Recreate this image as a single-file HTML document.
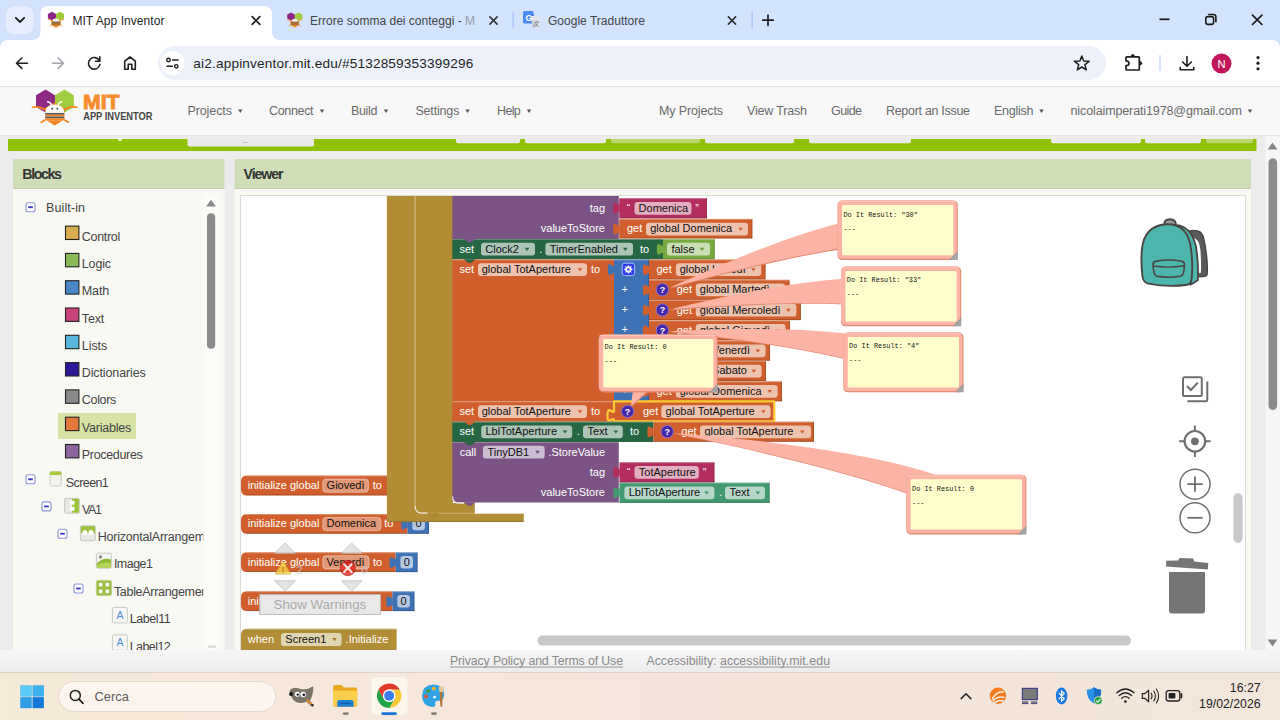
<!DOCTYPE html>
<html><head><meta charset="utf-8"><title>MIT App Inventor</title>
<style>
*{margin:0;padding:0}
html,body{width:1280px;height:720px;overflow:hidden;background:#ececec}
svg{display:block;position:absolute;left:0;top:0}
text{font-family:"Liberation Sans",sans-serif;white-space:pre}
.m{font-family:"Liberation Mono",monospace}
</style></head><body>
<svg width="1280" height="720" viewBox="0 0 1280 720">
<rect x="0" y="0" width="1280" height="40" fill="#d3e3fd"/>
<rect x="0" y="40" width="1280" height="47" fill="#ffffff"/>
<path d="M0 40 H8 A8 8 0 0 0 0 48 Z" fill="#d3e3fd"/>
<path d="M1280 40 H1272 A8 8 0 0 1 1280 48 Z" fill="#d3e3fd"/>
<rect x="6" y="6.5" width="27.5" height="27.5" fill="#e6eefd" rx="8"/>
<path d="M15.8 17.8 L20 22 L24.2 17.8" fill="none" stroke="#1f1f1f" stroke-width="1.8" stroke-linecap="round" stroke-linejoin="round"/>
<path d="M32 40 Q40.5 40 40.5 31.5 V14 Q40.5 6 48.5 6 H264 Q272 6 272 14 V31.5 Q272 40 280.5 40 Z" fill="#ffffff"/>
<g transform="translate(47.9,11.8) scale(1)">
<path d="M4.05 0 L8.1 2.1 V6.4 L4.05 8.5 L0 6.4 V2.1 Z" fill="#8e2486"/>
<path d="M12.15 0 L16.2 2.1 V6.4 L12.15 8.5 L8.1 6.4 V2.1 Z" fill="#9ccb3b"/>
<path d="M3.6 9 L8.1 6.8 L12.6 9 V13.2 L8.1 15.9 L3.6 13.2 Z" fill="#f6871f"/>
<path d="M0.2 7.6 Q2.3 7.4 4.2 9.2 M16 7.6 Q13.9 7.4 12 9.2 M3.9 13 L1.9 14.3 M12.3 13 L14.3 14.3" fill="none" stroke="#f6871f" stroke-width="1"/>
<ellipse cx="8.1" cy="8.6" rx="3.2" ry="1.9" fill="#ececec"/>
<rect x="3.9" y="9.7" width="8.4" height="3.5" fill="#b27a3e"/>
<rect x="3.9" y="10.2" width="8.4" height="0.8" fill="#8d6239"/>
<rect x="3.9" y="11.9" width="8.4" height="0.8" fill="#8d6239"/>
</g>
<text x="72.4" y="25.2" font-size="12" fill="#1f1f1f" textLength="92" lengthAdjust="spacing">MIT App Inventor</text>
<path d="M252.2 16.7 L259.8 24.3 M259.8 16.7 L252.2 24.3" fill="none" stroke="#1f1f1f" stroke-width="1.7" stroke-linecap="round"/>
<g transform="translate(287.2,12.6) scale(0.94)">
<path d="M4.05 0 L8.1 2.1 V6.4 L4.05 8.5 L0 6.4 V2.1 Z" fill="#8e2486"/>
<path d="M12.15 0 L16.2 2.1 V6.4 L12.15 8.5 L8.1 6.4 V2.1 Z" fill="#9ccb3b"/>
<path d="M3.6 9 L8.1 6.8 L12.6 9 V13.2 L8.1 15.9 L3.6 13.2 Z" fill="#f6871f"/>
<path d="M0.2 7.6 Q2.3 7.4 4.2 9.2 M16 7.6 Q13.9 7.4 12 9.2 M3.9 13 L1.9 14.3 M12.3 13 L14.3 14.3" fill="none" stroke="#f6871f" stroke-width="1"/>
<ellipse cx="8.1" cy="8.6" rx="3.2" ry="1.9" fill="#ececec"/>
<rect x="3.9" y="9.7" width="8.4" height="3.5" fill="#b27a3e"/>
<rect x="3.9" y="10.2" width="8.4" height="0.8" fill="#8d6239"/>
<rect x="3.9" y="11.9" width="8.4" height="0.8" fill="#8d6239"/>
</g>
<defs><linearGradient id="fade" x1="0" x2="1" y1="0" y2="0"><stop offset="0" stop-color="#3a3f47"/><stop offset="0.88" stop-color="#3a3f47"/><stop offset="1" stop-color="#3a3f47" stop-opacity="0.15"/></linearGradient></defs>
<text x="310" y="25.2" font-size="12" fill="#41464d" textLength="165" lengthAdjust="spacing">Errore somma dei conteggi - M</text>
<rect x="462" y="10" width="16" height="22" fill="#d3e3fd" opacity="0.55"/>
<path d="M489.9 16.9 L497.1 24.1 M497.1 16.9 L489.9 24.1" fill="none" stroke="#30343a" stroke-width="1.6" stroke-linecap="round"/>
<rect x="512.5" y="12" width="1.4" height="16" fill="#a8c7fa"/>
<g transform="translate(523,11)">
<path d="M1.5 0 H10 L13 12.5 H1.5 Q0 12.5 0 11 V1.5 Q0 0 1.5 0 Z" fill="#4a8af4"/>
<path d="M7.5 5 H16 Q17.5 5 17.5 6.5 V16 Q17.5 17.5 16 17.5 H10.5 Z" fill="#dfe3ea"/>
<path d="M10.5 17.5 L13 12.5 L9 12.5 Z" fill="#b8c4d8"/>
<text x="2.6" y="9.6" font-size="8.5" fill="#ffffff" font-weight="bold">G</text>
<text x="10.2" y="14.8" font-size="6.5" fill="#5f6b7a" font-family="&quot;Liberation Sans&quot;,&quot;Noto Sans CJK SC&quot;,sans-serif">文</text>
</g>
<text x="548" y="25.2" font-size="12" fill="#41464d" textLength="97" lengthAdjust="spacing">Google Traduttore</text>
<path d="M728.4 16.9 L735.6 24.1 M735.6 16.9 L728.4 24.1" fill="none" stroke="#30343a" stroke-width="1.6" stroke-linecap="round"/>
<rect x="751.5" y="12" width="1.4" height="16" fill="#a8c7fa"/>
<path d="M768 15 V25.5 M762.8 20.2 H773.2" fill="none" stroke="#1f1f1f" stroke-width="1.7" stroke-linecap="round"/>
<path d="M1159.5 19.3 H1169.5" fill="none" stroke="#1a1a1a" stroke-width="1.7"/>
<rect x="1205.8" y="16.6" width="7.8" height="7.8" rx="2.2" fill="none" stroke="#1a1a1a" stroke-width="1.6"/>
<path d="M1208.2 14.5 H1213.4 Q1215.9 14.5 1215.9 17 V22.2" fill="none" stroke="#1a1a1a" stroke-width="1.6"/>
<path d="M1252 14.6 L1262.4 25 M1262.4 14.6 L1252 25" fill="none" stroke="#1a1a1a" stroke-width="1.7"/>
<path d="M27.5 63.2 H16.8 M21.8 58 L16.5 63.2 L21.8 68.4" fill="none" stroke="#1f1f1f" stroke-width="1.6" stroke-linecap="round" stroke-linejoin="round"/>
<path d="M52.5 63.2 H63.2 M58.2 58 L63.5 63.2 L58.2 68.4" fill="none" stroke="#a3a6ab" stroke-width="1.6" stroke-linecap="round" stroke-linejoin="round"/>
<path d="M99.3 60.5 A5.8 5.8 0 1 0 99.9 64.6" fill="none" stroke="#1f1f1f" stroke-width="1.6" stroke-linecap="round"/>
<path d="M99.8 56.8 V61.2 H95.4" fill="none" stroke="#1f1f1f" stroke-width="1.6" stroke-linecap="round" stroke-linejoin="round"/>
<path d="M124.7 69.2 V61.2 L130 57 L135.3 61.2 V69.2 H131.8 V64.3 H128.2 V69.2 Z" fill="none" stroke="#1f1f1f" stroke-width="1.6" stroke-linejoin="round"/>
<rect x="158" y="46" width="948" height="34" fill="#edf2fa" rx="17"/>
<circle cx="172.5" cy="63" r="12" fill="#ffffff"/>
<circle cx="168.5" cy="60" r="1.7" fill="none" stroke="#1f1f1f" stroke-width="1.4"/>
<path d="M172.5 60 H178" fill="none" stroke="#1f1f1f" stroke-width="1.5" stroke-linecap="round"/>
<circle cx="176.3" cy="66.3" r="1.7" fill="none" stroke="#1f1f1f" stroke-width="1.4"/>
<path d="M167 66.3 H172.3" fill="none" stroke="#1f1f1f" stroke-width="1.5" stroke-linecap="round"/>
<text x="193.3" y="68" font-size="13.6" fill="#1f1f1f" textLength="280" lengthAdjust="spacing">ai2.appinventor.mit.edu/#5132859353399296</text>
<path d="M1081.8 56.0 L1083.7 61.0 L1089.1 61.3 L1084.9 64.7 L1086.3 69.9 L1081.8 67.0 L1077.3 69.9 L1078.7 64.7 L1074.5 61.3 L1079.9 61.0 Z" fill="none" stroke="#1f1f1f" stroke-width="1.5" stroke-linejoin="round"/>
<path d="M1126.8 56.8 H1138.5 Q1139.3 56.8 1139.3 57.6 V69.2 Q1139.3 70 1138.5 70 H1126.8 Q1126 70 1126 69.2 V65.7 Q1129 65.6 1129 63.3 Q1129 61 1126 60.9 V57.6 Q1126 56.8 1126.8 56.8 Z" fill="none" stroke="#1f1f1f" stroke-width="1.7" stroke-linejoin="round"/>
<path d="M1130.6 56.6 Q1131 54 1132.8 54 Q1134.6 54 1135 56.6 Z" fill="#1f1f1f"/>
<path d="M1139.5 61 Q1142.2 61.3 1142.2 63.3 Q1142.2 65.3 1139.5 65.6 Z" fill="#1f1f1f"/>
<rect x="1159.3" y="55" width="1.4" height="16" fill="#c7d7f5"/>
<path d="M1187 56.5 V66 M1182.6 62 L1187 66.3 L1191.4 62" fill="none" stroke="#1f1f1f" stroke-width="1.6" stroke-linecap="round" stroke-linejoin="round"/>
<path d="M1180.2 67.5 V69.8 H1193.8 V67.5" fill="none" stroke="#1f1f1f" stroke-width="1.6" stroke-linecap="round" stroke-linejoin="round"/>
<circle cx="1221.5" cy="63.5" r="10" fill="#c2185b"/>
<text x="1221.5" y="67.6" font-size="11.2" fill="#ffffff" text-anchor="middle">N</text>
<circle cx="1258" cy="57.6" r="1.6" fill="#1f1f1f"/>
<circle cx="1258" cy="63.2" r="1.6" fill="#1f1f1f"/>
<circle cx="1258" cy="68.8" r="1.6" fill="#1f1f1f"/>
<rect x="0" y="86" width="1280" height="1" fill="#e3e3e3"/>
<rect x="0" y="87" width="1280" height="48" fill="#f8f8f8"/>
<rect x="0" y="135" width="1280" height="1" fill="#e6e6e2"/>
<path d="M45.6 89.6 L55 95.2 V107 L45.6 112.4 L36 107 V95.2 Z" fill="#8f2a84"/>
<path d="M64.4 89.6 L73.8 95.2 V107 L64.4 112.4 L55 107 V95.2 Z" fill="#a0cc3f"/>
<path d="M45 108 L54.7 102.5 L64.4 108 V119.5 L54.7 125.4 L45 119.5 Z" fill="#f5841f"/>
<path d="M32.5 107.3 Q39 105.6 46.5 110.5" fill="none" stroke="#f5841f" stroke-width="1.7" stroke-linecap="round"/>
<path d="M76.8 107.3 Q70.5 105.6 63 110.5" fill="none" stroke="#f5841f" stroke-width="1.7" stroke-linecap="round"/>
<path d="M45.8 119.6 L41.3 122.3 M63.6 119.6 L68.2 122.3" fill="none" stroke="#f5841f" stroke-width="1.7" stroke-linecap="round"/>
<path d="M45.3 113 Q45.3 104.5 54.7 104.5 Q64.2 104.5 64.2 113 Z" fill="#ffffff"/>
<rect x="45.3" y="112.8" width="18.9" height="7.4" fill="#ffffff"/>
<rect x="45.3" y="112.9" width="18.9" height="1.9" fill="#5a5a5a"/>
<rect x="45.3" y="114.8" width="18.9" height="1.7" fill="#f5841f"/>
<rect x="45.3" y="116.5" width="18.9" height="1.9" fill="#5a5a5a"/>
<rect x="45.3" y="118.4" width="18.9" height="1.6" fill="#f5841f"/>
<circle cx="52.2" cy="108.7" r="0.9" fill="#333"/>
<circle cx="57.3" cy="108.7" r="0.9" fill="#333"/>
<path d="M51.5 105 Q50.6 102.2 47.6 101.8 M58 105 Q58.9 102.2 61.9 101.8" fill="none" stroke="#ffffff" stroke-width="1.4" stroke-linecap="round"/>
<text x="83" y="109" font-size="19.8" fill="#f78d2c" textLength="36.6" lengthAdjust="spacingAndGlyphs" font-weight="bold" stroke="#f78d2c" stroke-width="0.9">MIT</text>
<text x="83.2" y="120.4" font-size="10.2" fill="#454545" textLength="69.3" lengthAdjust="spacingAndGlyphs" font-weight="bold">APP INVENTOR</text>
<text x="187.4" y="115.4" font-size="12.5" fill="#6a6a6a" textLength="44.6" lengthAdjust="spacing">Projects</text>
<path d="M238.1 109.5 H242.5 L240.3 113 Z" fill="#555"/>
<text x="269" y="115.4" font-size="12.5" fill="#6a6a6a" textLength="44.6" lengthAdjust="spacing">Connect</text>
<path d="M319.8 109.5 H324.2 L322 113 Z" fill="#555"/>
<text x="351" y="115.4" font-size="12.5" fill="#6a6a6a" textLength="26.4" lengthAdjust="spacing">Build</text>
<path d="M383.8 109.5 H388.2 L386 113 Z" fill="#555"/>
<text x="415.4" y="115.4" font-size="12.5" fill="#6a6a6a" textLength="44" lengthAdjust="spacing">Settings</text>
<path d="M465.3 109.5 H469.7 L467.5 113 Z" fill="#555"/>
<text x="497" y="115.4" font-size="12.5" fill="#6a6a6a" textLength="23.8" lengthAdjust="spacing">Help</text>
<path d="M526.8 109.5 H531.2 L529 113 Z" fill="#555"/>
<text x="659" y="115.4" font-size="12.5" fill="#6a6a6a" textLength="64" lengthAdjust="spacing">My Projects</text>
<text x="747" y="115.4" font-size="12.5" fill="#6a6a6a" textLength="60" lengthAdjust="spacing">View Trash</text>
<text x="831" y="115.4" font-size="12.5" fill="#6a6a6a" textLength="31" lengthAdjust="spacing">Guide</text>
<text x="886" y="115.4" font-size="12.5" fill="#6a6a6a" textLength="84" lengthAdjust="spacing">Report an Issue</text>
<text x="994" y="115.4" font-size="12.5" fill="#6a6a6a" textLength="39.5" lengthAdjust="spacing">English</text>
<path d="M1039.3 109.5 H1043.7 L1041.5 113 Z" fill="#555"/>
<text x="1070.5" y="115.4" font-size="12.5" fill="#6a6a6a" textLength="171.5" lengthAdjust="spacing">nicolaimperati1978@gmail.com</text>
<path d="M1247.8 109.5 H1252.2 L1250 113 Z" fill="#555"/>
<rect x="8" y="139" width="1248.5" height="12" fill="#8fc202"/>
<path d="M187.5 139 H314 V144.5 Q314 146.5 312 146.5 H189.5 Q187.5 146.5 187.5 144.5 Z" fill="#e9e9e9"/>
<circle cx="120" cy="139" r="2" fill="#f4f4f0"/>
<text x="243" y="143" font-size="8" fill="#555">..</text>
<path d="M456 139 H520 V141.3 Q520 143.3 518 143.3 H458 Q456 143.3 456 141.3 Z" fill="#ebebeb"/>
<path d="M525 139 H606 V141.3 Q606 143.3 604 143.3 H527 Q525 143.3 525 141.3 Z" fill="#ebebeb"/>
<path d="M611 139 H700 V141.3 Q700 143.3 698 143.3 H613 Q611 143.3 611 141.3 Z" fill="#b9d66c"/>
<path d="M705 139 H794 V141.3 Q794 143.3 792 143.3 H707 Q705 143.3 705 141.3 Z" fill="#ebebeb"/>
<path d="M809 139 H911 V141.3 Q911 143.3 909 143.3 H811 Q809 143.3 809 141.3 Z" fill="#ebebeb"/>
<path d="M1051 139 H1141 V141.3 Q1141 143.3 1139 143.3 H1053 Q1051 143.3 1051 141.3 Z" fill="#ebebeb"/>
<path d="M1145 139 H1201 V141.3 Q1201 143.3 1199 143.3 H1147 Q1145 143.3 1145 141.3 Z" fill="#ebebeb"/>
<path d="M1206 139 H1253 V141.3 Q1253 143.3 1251 143.3 H1208 Q1206 143.3 1206 141.3 Z" fill="#b9d66c"/>
<rect x="1265.5" y="136" width="14.5" height="514" fill="#f6f6f6"/>
<path d="M1272.5 142.5 L1277.5 149.5 H1267.5 Z" fill="#858585"/>
<path d="M1272.5 646.5 L1277.5 639.5 H1267.5 Z" fill="#858585"/>
<rect x="1268.5" y="158.3" width="8.6" height="251.7" fill="#8b8b8b" rx="4.3"/>
<rect x="13" y="159" width="211.5" height="30" fill="#cfdeb7"/>
<rect x="13" y="188" width="211.5" height="1" fill="#c3cfae"/>
<rect x="13" y="189" width="211.5" height="461" fill="#f9f9f4"/>
<rect x="234.5" y="159" width="1016.5" height="30" fill="#cfdeb7"/>
<rect x="234.5" y="188" width="1016.5" height="1" fill="#c3cfae"/>
<rect x="234.5" y="189" width="1016.5" height="461" fill="#f9f9f4"/>
<text x="22.3" y="179" font-size="14.2" fill="#333" textLength="39.5" lengthAdjust="spacing" font-weight="bold">Blocks</text>
<text x="243.6" y="179" font-size="14.2" fill="#333" textLength="40" lengthAdjust="spacing" font-weight="bold">Viewer</text>
<rect x="203.5" y="195" width="15" height="455" fill="#fbfbf8"/>
<path d="M211 199.7 L216 206.6 H206 Z" fill="#8a8a8a"/>
<rect x="207" y="213.3" width="8.2" height="135.5" fill="#8a8a8a" rx="4.1"/>
<rect x="208" y="645.5" width="8" height="2.5" fill="#dcdcd8"/>
<rect x="26" y="202.7" width="9" height="9" rx="2" fill="#fff" stroke="#8e93dd" stroke-width="1.1"/>
<rect x="28.2" y="206.3" width="4.6" height="1.8" fill="#3535cf"/>
<text x="46" y="211.8" font-size="12.5" fill="#444" textLength="39" lengthAdjust="spacing">Built-in</text>
<rect x="65.5" y="226.1" width="13.4" height="13.4" fill="#d8ab4b" stroke="#222" stroke-width="1.1"/>
<text x="81.8" y="240.6" font-size="12.5" fill="#444" textLength="38.5" lengthAdjust="spacing">Control</text>
<rect x="65.5" y="253.4" width="13.4" height="13.4" fill="#8aba56" stroke="#222" stroke-width="1.1"/>
<text x="81.8" y="267.9" font-size="12.5" fill="#444" textLength="29.3" lengthAdjust="spacing">Logic</text>
<rect x="65.5" y="280.7" width="13.4" height="13.4" fill="#4b87c6" stroke="#222" stroke-width="1.1"/>
<text x="81.8" y="295.2" font-size="12.5" fill="#444" textLength="27.5" lengthAdjust="spacing">Math</text>
<rect x="65.5" y="308" width="13.4" height="13.4" fill="#c9417a" stroke="#222" stroke-width="1.1"/>
<text x="81.8" y="322.5" font-size="12.5" fill="#444" textLength="22.5" lengthAdjust="spacing">Text</text>
<rect x="65.5" y="335.3" width="13.4" height="13.4" fill="#57b6de" stroke="#222" stroke-width="1.1"/>
<text x="81.8" y="349.8" font-size="12.5" fill="#444" textLength="25.5" lengthAdjust="spacing">Lists</text>
<rect x="65.5" y="362.6" width="13.4" height="13.4" fill="#2d1799" stroke="#222" stroke-width="1.1"/>
<text x="81.8" y="377.1" font-size="12.5" fill="#444" textLength="64" lengthAdjust="spacing">Dictionaries</text>
<rect x="65.5" y="389.9" width="13.4" height="13.4" fill="#8a8a8a" stroke="#222" stroke-width="1.1"/>
<text x="81.8" y="404.4" font-size="12.5" fill="#444" textLength="34.5" lengthAdjust="spacing">Colors</text>
<rect x="58" y="413" width="78" height="26" fill="#d6e3a4"/>
<rect x="65.5" y="417.2" width="13.4" height="13.4" fill="#e5773b" stroke="#222" stroke-width="1.1"/>
<text x="81.8" y="431.7" font-size="12.5" fill="#444" textLength="49.5" lengthAdjust="spacing">Variables</text>
<rect x="65.5" y="444.5" width="13.4" height="13.4" fill="#8f649c" stroke="#222" stroke-width="1.1"/>
<text x="81.8" y="459" font-size="12.5" fill="#444" textLength="61" lengthAdjust="spacing">Procedures</text>
<clipPath id="treeclip"><rect x="13" y="189" width="190.3" height="461"/></clipPath><g clip-path="url(#treeclip)">
<rect x="26" y="474.8" width="9" height="9" rx="2" fill="#fff" stroke="#8e93dd" stroke-width="1.1"/>
<rect x="28.2" y="478.4" width="4.6" height="1.8" fill="#3535cf"/>
<rect x="49.9" y="471.5" width="11.4" height="14.6" rx="1.5" fill="#f1f1ee" stroke="#c9c9c4" stroke-width="0.9"/>
<path d="M49.9 475 V473 Q49.9 471.5 51.4 471.5 H59.8 Q61.3 471.5 61.3 473 V475 Z" fill="#a9c93a"/>
<text x="65.8" y="487" font-size="12.5" fill="#444" textLength="43" lengthAdjust="spacing">Screen1</text>
<rect x="42" y="501.9" width="9" height="9" rx="2" fill="#fff" stroke="#8e93dd" stroke-width="1.1"/>
<rect x="44.2" y="505.5" width="4.6" height="1.8" fill="#3535cf"/>
<rect x="64.6" y="498.4" width="14.8" height="14.8" rx="1.5" fill="#e9e9e5" stroke="#c4c4be" stroke-width="0.9"/>
<rect x="72" y="498.9" width="6.9" height="13.8" fill="#9dc23c"/>
<rect x="70" y="500.8" width="4.6" height="4" rx="1" fill="#fff"/><rect x="70" y="506.8" width="4.6" height="4" rx="1" fill="#fff"/>
<text x="82" y="513.6" font-size="12.5" fill="#444" textLength="20" lengthAdjust="spacing">VA1</text>
<rect x="58" y="529.2" width="9" height="9" rx="2" fill="#fff" stroke="#8e93dd" stroke-width="1.1"/>
<rect x="60.2" y="532.8" width="4.6" height="1.8" fill="#3535cf"/>
<rect x="80.4" y="525.7" width="15" height="15" rx="1.5" fill="#e9e9e5" stroke="#c4c4be" stroke-width="0.9"/>
<rect x="80.9" y="526.2" width="14" height="6.6" fill="#9dc23c"/>
<rect x="83" y="530.3" width="4.2" height="4.4" rx="1" fill="#fff"/><rect x="88.8" y="530.3" width="4.2" height="4.4" rx="1" fill="#fff"/>
<text x="97.8" y="541" font-size="12.5" fill="#444" textLength="130.7" lengthAdjust="spacing">HorizontalArrangement1</text>
<rect x="96.4" y="553.2" width="15" height="15" rx="1.5" fill="#f4f4f0" stroke="#c4c4be" stroke-width="0.9"/>
<path d="M96.9 563.5 Q103 557 110.9 559.5 V567.7 H96.9 Z" fill="#8db92e"/>
<path d="M96.9 565.5 Q104 560.5 110.9 563.5 V567.7 H96.9 Z" fill="#b5d55a"/>
<circle cx="100.5" cy="557" r="1.7" fill="#8e8e8a"/>
<text x="113.9" y="568.3" font-size="12.5" fill="#444" textLength="39" lengthAdjust="spacing">Image1</text>
<rect x="74" y="584" width="9" height="9" rx="2" fill="#fff" stroke="#8e93dd" stroke-width="1.1"/>
<rect x="76.2" y="587.6" width="4.6" height="1.8" fill="#3535cf"/>
<rect x="96.4" y="580.4" width="15" height="15" rx="1.5" fill="#9dc23c" stroke="#b3c987" stroke-width="0.9"/>
<rect x="98.6" y="582.6" width="4.2" height="4.2" rx="0.8" fill="#fff" stroke="#7f9e33" stroke-width="0.5"/>
<rect x="98.6" y="589.2" width="4.2" height="4.2" rx="0.8" fill="#fff" stroke="#7f9e33" stroke-width="0.5"/>
<rect x="105.2" y="582.6" width="4.2" height="4.2" rx="0.8" fill="#fff" stroke="#7f9e33" stroke-width="0.5"/>
<rect x="105.2" y="589.2" width="4.2" height="4.2" rx="0.8" fill="#fff" stroke="#7f9e33" stroke-width="0.5"/>
<text x="113.9" y="596" font-size="12.5" fill="#444" textLength="104.2" lengthAdjust="spacing">TableArrangement1</text>
<rect x="112.4" y="607.4" width="15" height="15.5" rx="1.5" fill="#f7f7f5" stroke="#c4c4c0" stroke-width="0.9"/>
<text x="119.9" y="618.7" font-size="10.5" fill="#4b8bd4" text-anchor="middle">A</text>
<text x="129.7" y="623.3" font-size="12.5" fill="#444" textLength="41" lengthAdjust="spacing">Label11</text>
<rect x="112.4" y="634.8" width="15" height="15.5" rx="1.5" fill="#f7f7f5" stroke="#c4c4c0" stroke-width="0.9"/>
<text x="119.9" y="646.1" font-size="10.5" fill="#4b8bd4" text-anchor="middle">A</text>
<text x="129.7" y="650.6" font-size="12.5" fill="#444" textLength="41" lengthAdjust="spacing">Label12</text>
</g>
<rect x="240.5" y="195.5" width="1005" height="455" fill="#ffffff" stroke="#dcdcd8" stroke-width="1"/>
<clipPath id="wsclip"><rect x="241" y="196" width="1004" height="454"/></clipPath><g clip-path="url(#wsclip)">
<path d="M247 475.6 H400 V495.4 H247 Q241 495.4 241 489.4 V481.6 Q241 475.6 247 475.6 Z" fill="#d05f2d"/>
<rect x="246" y="475.6" width="154" height="1" fill="#ffffff" opacity="0.28"/>
<rect x="246" y="494.4" width="154" height="1" fill="#000000" opacity="0.18"/>
<text x="247.8" y="488.8" font-size="11" fill="#ffffff">initialize global</text>
<rect x="322.8" y="479" width="45.6" height="13.2" rx="3.2" fill="#ffffff" fill-opacity="0.36" stroke="#ffffff" stroke-opacity="0.45" stroke-width="0.9"/>
<text x="326.6" y="488.9" font-size="11" fill="#111">Giovedì</text>
<text x="372.8" y="488.8" font-size="11" fill="#ffffff">to</text>
<path d="M247 514 H407.5 V533.8 H247 Q241 533.8 241 527.8 V520 Q241 514 247 514 Z" fill="#d05f2d"/>
<rect x="246" y="514" width="161.5" height="1" fill="#ffffff" opacity="0.28"/>
<rect x="246" y="532.8" width="161.5" height="1" fill="#000000" opacity="0.18"/>
<text x="247.8" y="527.2" font-size="11" fill="#ffffff">initialize global</text>
<rect x="322.8" y="517.4" width="58.2" height="13.2" rx="3.2" fill="#ffffff" fill-opacity="0.36" stroke="#ffffff" stroke-opacity="0.45" stroke-width="0.9"/>
<text x="326.6" y="527.3" font-size="11" fill="#111">Domenica</text>
<text x="384.3" y="527.2" font-size="11" fill="#ffffff">to</text>
<rect x="407.5" y="514" width="21.5" height="19.8" fill="#3f71b5"/>
<rect x="407.5" y="514" width="21.5" height="1" fill="#ffffff" opacity="0.28"/>
<rect x="407.5" y="532.8" width="21.5" height="1" fill="#000000" opacity="0.18"/>
<rect x="428" y="514" width="1" height="19.8" fill="#000" opacity="0.15"/>
<path d="M407.8 518.2 c 0,8.1 -6.48,-6.48 -6.48,6.075 s 6.48,-2.025 6.48,6.075 Z" fill="#3f71b5"/>
<rect x="412.3" y="517.7" width="12.6" height="12.6" fill="#ffffff" rx="3" opacity="0.62"/>
<text x="418.6" y="527.4" font-size="11" fill="#111" text-anchor="middle">0</text>
<path d="M247 552.3 H395.6 V572.1 H247 Q241 572.1 241 566.1 V558.3 Q241 552.3 247 552.3 Z" fill="#d05f2d"/>
<rect x="246" y="552.3" width="149.6" height="1" fill="#ffffff" opacity="0.28"/>
<rect x="246" y="571.1" width="149.6" height="1" fill="#000000" opacity="0.18"/>
<text x="247.8" y="565.5" font-size="11" fill="#ffffff">initialize global</text>
<rect x="322.8" y="555.7" width="46.2" height="13.2" rx="3.2" fill="#ffffff" fill-opacity="0.36" stroke="#ffffff" stroke-opacity="0.45" stroke-width="0.9"/>
<text x="326.6" y="565.6" font-size="11" fill="#111">Venerdì</text>
<text x="373" y="565.5" font-size="11" fill="#ffffff">to</text>
<rect x="395.6" y="552.3" width="22" height="19.8" fill="#3f71b5"/>
<rect x="395.6" y="552.3" width="22" height="1" fill="#ffffff" opacity="0.28"/>
<rect x="395.6" y="571.1" width="22" height="1" fill="#000000" opacity="0.18"/>
<rect x="416.6" y="552.3" width="1" height="19.8" fill="#000" opacity="0.15"/>
<path d="M395.9 556.5 c 0,8.1 -6.48,-6.48 -6.48,6.075 s 6.48,-2.025 6.48,6.075 Z" fill="#3f71b5"/>
<rect x="400.4" y="556" width="12.6" height="12.6" fill="#ffffff" rx="3" opacity="0.62"/>
<text x="406.7" y="565.7" font-size="11" fill="#111" text-anchor="middle">0</text>
<path d="M247 591.3 H392.5 V611.1 H247 Q241 611.1 241 605.1 V597.3 Q241 591.3 247 591.3 Z" fill="#d05f2d"/>
<rect x="246" y="591.3" width="146.5" height="1" fill="#ffffff" opacity="0.28"/>
<rect x="246" y="610.1" width="146.5" height="1" fill="#000000" opacity="0.18"/>
<text x="247.8" y="604.5" font-size="11" fill="#ffffff">initialize global</text>
<rect x="322.8" y="594.7" width="43.2" height="13.2" rx="3.2" fill="#ffffff" fill-opacity="0.36" stroke="#ffffff" stroke-opacity="0.45" stroke-width="0.9"/>
<text x="326.6" y="604.6" font-size="11" fill="#111">Martedì</text>
<text x="370" y="604.5" font-size="11" fill="#ffffff">to</text>
<rect x="392.5" y="591.3" width="22" height="19.8" fill="#3f71b5"/>
<rect x="392.5" y="591.3" width="22" height="1" fill="#ffffff" opacity="0.28"/>
<rect x="392.5" y="610.1" width="22" height="1" fill="#000000" opacity="0.18"/>
<rect x="413.5" y="591.3" width="1" height="19.8" fill="#000" opacity="0.15"/>
<path d="M392.8 595.5 c 0,8.1 -6.48,-6.48 -6.48,6.075 s 6.48,-2.025 6.48,6.075 Z" fill="#3f71b5"/>
<rect x="397.3" y="595" width="12.6" height="12.6" fill="#ffffff" rx="3" opacity="0.62"/>
<text x="403.6" y="604.7" font-size="11" fill="#111" text-anchor="middle">0</text>
<path d="M247 628.8 H396.6 V660 H241 V634.8 Q241 628.8 247 628.8 Z" fill="#b18e35"/>
<rect x="246" y="628.8" width="150" height="1" fill="#ffffff" opacity="0.28"/>
<text x="247.8" y="642.8" font-size="11" fill="#ffffff">when</text>
<rect x="281" y="633.1" width="60.6" height="12.8" fill="#ffffff" rx="3.2" opacity="0.62"/>
<text x="285.3" y="642.8" font-size="11" fill="#111">Screen1</text>
<path d="M332.2 638.1 H336.8 L334.5 641.2 Z" fill="#a07f2c"/>
<text x="345.6" y="642.8" font-size="11" fill="#ffffff">.Initialize</text>
<path d="M386.9 190 H453 V503 H474.8 V513.8 H523.8 V521.9 H390 Q386.9 521.9 386.9 518.9 Z" fill="#b18e35"/>
<rect x="414.6" y="190" width="1" height="317" fill="#dccb9a" opacity="0.85"/>
<path d="M415.1 506 Q415.1 513.1 422 513.1 H428" fill="none" stroke="#ffffff" stroke-width="1.1" opacity="0.85"/>
<path d="M428 513.3 H474.6" fill="none" stroke="#e6d9b0" stroke-width="0.8" opacity="0.55"/>
<path d="M475 513.6 H523.6" fill="none" stroke="#e6d9b0" stroke-width="0.8" opacity="0.35"/>
<rect x="388" y="520.9" width="135.8" height="1" fill="#000000" opacity="0.18"/>
<path d="M427 513.2 l 4.4,2.8 h 2.4 l 4.4,-2.8" fill="#b18e35" stroke="#9a7b2b" stroke-width="0.7"/>
<rect x="452.3" y="190" width="166.5" height="49.1" fill="#7c5385"/>
<text x="605" y="211.8" font-size="11" fill="#ffffff" text-anchor="end">tag</text>
<text x="605" y="232.4" font-size="11" fill="#ffffff" text-anchor="end">valueToStore</text>
<rect x="619.2" y="198.1" width="87.8" height="20.3" fill="#b32d5e"/>
<rect x="619.2" y="198.1" width="87.8" height="1" fill="#ffffff" opacity="0.28"/>
<rect x="619.2" y="217.4" width="87.8" height="1" fill="#000000" opacity="0.18"/>
<rect x="706" y="198.1" width="1" height="20.3" fill="#000" opacity="0.15"/>
<path d="M619.5 202.3 c 0,8.1 -6.48,-6.48 -6.48,6.075 s 6.48,-2.025 6.48,6.075 Z" fill="#b32d5e"/>
<text x="626.5" y="211.6" font-size="11" fill="#ffffff">“</text>
<text x="695.2" y="211.6" font-size="11" fill="#ffffff">”</text>
<rect x="634.5" y="201.9" width="57" height="12.8" fill="#ffffff" rx="3.2" opacity="0.62"/>
<text x="638.6" y="211.6" font-size="11" fill="#111">Domenica</text>
<rect x="619.2" y="218.9" width="133.2" height="19.6" fill="#d05f2d"/>
<rect x="619.2" y="218.9" width="133.2" height="1" fill="#ffffff" opacity="0.28"/>
<rect x="619.2" y="237.5" width="133.2" height="1" fill="#000000" opacity="0.18"/>
<rect x="751.4" y="218.9" width="1" height="19.6" fill="#000" opacity="0.15"/>
<path d="M619.5 223.1 c 0,8.1 -6.48,-6.48 -6.48,6.075 s 6.48,-2.025 6.48,6.075 Z" fill="#d05f2d"/>
<text x="627" y="232.4" font-size="11" fill="#ffffff">get</text>
<rect x="646" y="222.7" width="102" height="12.8" fill="#ffffff" rx="3.2" opacity="0.62"/>
<text x="650.2" y="232.4" font-size="11" fill="#111">global Domenica</text>
<path d="M738.3 227.7 H742.9 L740.6 230.8 Z" fill="#cf5a27"/>
<rect x="452.3" y="239" width="210.7" height="20.3" fill="#266643"/>
<rect x="452.3" y="239" width="210.7" height="1" fill="#ffffff" opacity="0.28"/>
<path d="M463.8 238.9 l 4.4,3.4 h 3 l 4.4,-3.4 Z" fill="#7c5385"/>
<text x="459.5" y="252.5" font-size="11" fill="#ffffff">set</text>
<rect x="481" y="242.8" width="54" height="12.8" fill="#ffffff" rx="3.2" opacity="0.62"/>
<text x="485.3" y="252.5" font-size="11" fill="#111">Clock2</text>
<path d="M524.7 247.8 H529.3 L527 250.9 Z" fill="#266643"/>
<text x="539.3" y="252.5" font-size="11" fill="#ffffff">.</text>
<rect x="545.4" y="242.8" width="87.6" height="12.8" fill="#ffffff" rx="3.2" opacity="0.62"/>
<text x="549.8" y="252.5" font-size="11" fill="#111">TimerEnabled</text>
<path d="M623 247.8 H627.6 L625.3 250.9 Z" fill="#266643"/>
<text x="640" y="252.5" font-size="11" fill="#ffffff">to</text>
<rect x="663" y="239" width="51.8" height="20.3" fill="#77ab41"/>
<rect x="663" y="239" width="51.8" height="1" fill="#ffffff" opacity="0.28"/>
<rect x="663" y="258.3" width="51.8" height="1" fill="#000000" opacity="0.18"/>
<rect x="713.8" y="239" width="1" height="20.3" fill="#000" opacity="0.15"/>
<path d="M663.3 243.2 c 0,8.1 -6.48,-6.48 -6.48,6.075 s 6.48,-2.025 6.48,6.075 Z" fill="#77ab41"/>
<rect x="667" y="242.8" width="43" height="12.8" fill="#ffffff" rx="3.2" opacity="0.62"/>
<text x="671.4" y="252.5" font-size="11" fill="#111">false</text>
<path d="M699.7 247.8 H704.3 L702 250.9 Z" fill="#6a9c38"/>
<rect x="452.3" y="259.4" width="162" height="142.1" fill="#d05f2d"/>
<rect x="452.3" y="259.4" width="162" height="1" fill="#ffffff" opacity="0.28"/>
<path d="M463.8 259.3 l 4.4,3.4 h 3 l 4.4,-3.4 Z" fill="#266643"/>
<text x="459.5" y="272.9" font-size="11" fill="#ffffff">set</text>
<rect x="478" y="263.2" width="109" height="12.8" fill="#ffffff" rx="3.2" opacity="0.62"/>
<text x="481.7" y="272.9" font-size="11" fill="#111">global TotAperture</text>
<path d="M577.7 268.2 H582.3 L580 271.3 Z" fill="#cf5a27"/>
<text x="591" y="272.9" font-size="11" fill="#ffffff">to</text>
<rect x="614" y="259.4" width="35" height="141.9" fill="#3f71b5"/>
<rect x="614" y="259.4" width="35" height="1" fill="#ffffff" opacity="0.28"/>
<rect x="614" y="400.3" width="35" height="1" fill="#000000" opacity="0.18"/>
<rect x="648" y="259.4" width="1" height="141.9" fill="#000" opacity="0.15"/>
<path d="M614.3 263.6 c 0,8.1 -6.48,-6.48 -6.48,6.075 s 6.48,-2.025 6.48,6.075 Z" fill="#3f71b5"/>
<rect x="622.2" y="263.2" width="12.4" height="12.4" fill="#2a3bf0" rx="2.5" stroke="#b9c6fb" stroke-width="0.9"/>
<circle cx="628.4" cy="269.4" r="2.4" fill="none" stroke="#ffffff" stroke-width="1.4"/>
<path d="M628.4 265.2 V273.6 M624.2 269.4 H632.6 M625.4 266.4 L631.4 272.4 M631.4 266.4 L625.4 272.4" fill="none" stroke="#ffffff" stroke-width="1.1"/>
<circle cx="628.4" cy="269.4" r="1.2" fill="#2a3bf0"/>
<rect x="649" y="259.5" width="116.6" height="20" fill="#d05f2d"/>
<rect x="649" y="259.5" width="116.6" height="1" fill="#ffffff" opacity="0.28"/>
<rect x="649" y="278.5" width="116.6" height="1" fill="#000000" opacity="0.18"/>
<rect x="764.6" y="259.5" width="1" height="20" fill="#000" opacity="0.15"/>
<path d="M649.3 263.7 c 0,8.1 -6.48,-6.48 -6.48,6.075 s 6.48,-2.025 6.48,6.075 Z" fill="#d05f2d"/>
<text x="656.5" y="272.9" font-size="11" fill="#ffffff">get</text>
<rect x="675.9" y="263.2" width="85.3" height="12.8" fill="#ffffff" rx="3.2" opacity="0.62"/>
<text x="679.7" y="272.9" font-size="11" fill="#111">global Lunedì</text>
<path d="M751.1 268.2 H755.7 L753.4 271.3 Z" fill="#cf5a27"/>
<rect x="649" y="279.8" width="140.6" height="20" fill="#d05f2d"/>
<rect x="649" y="279.8" width="140.6" height="1" fill="#ffffff" opacity="0.28"/>
<rect x="649" y="298.8" width="140.6" height="1" fill="#000000" opacity="0.18"/>
<rect x="788.6" y="279.8" width="1" height="20" fill="#000" opacity="0.15"/>
<path d="M649.3 284 c 0,8.1 -6.48,-6.48 -6.48,6.075 s 6.48,-2.025 6.48,6.075 Z" fill="#d05f2d"/>
<text x="621.5" y="292.8" font-size="11" fill="#ffffff">+</text>
<circle cx="662.4" cy="289.7" r="6.2" fill="#4527a8" stroke="#8f7bd6" stroke-width="0.9"/>
<text x="662.4" y="293" font-size="9" fill="#ffffff" font-weight="bold" text-anchor="middle">?</text>
<text x="676.7" y="293.2" font-size="11" fill="#ffffff">get</text>
<rect x="695.8" y="283.5" width="89.3" height="12.8" fill="#ffffff" rx="3.2" opacity="0.62"/>
<text x="699.8" y="293.2" font-size="11" fill="#111">global Martedì</text>
<path d="M774.8 288.5 H779.4 L777.1 291.6 Z" fill="#cf5a27"/>
<rect x="649" y="300.1" width="151.9" height="20" fill="#d05f2d"/>
<rect x="649" y="300.1" width="151.9" height="1" fill="#ffffff" opacity="0.28"/>
<rect x="649" y="319.1" width="151.9" height="1" fill="#000000" opacity="0.18"/>
<rect x="799.9" y="300.1" width="1" height="20" fill="#000" opacity="0.15"/>
<path d="M649.3 304.3 c 0,8.1 -6.48,-6.48 -6.48,6.075 s 6.48,-2.025 6.48,6.075 Z" fill="#d05f2d"/>
<text x="621.5" y="313.1" font-size="11" fill="#ffffff">+</text>
<circle cx="662.4" cy="310" r="6.2" fill="#4527a8" stroke="#8f7bd6" stroke-width="0.9"/>
<text x="662.4" y="313.3" font-size="9" fill="#ffffff" font-weight="bold" text-anchor="middle">?</text>
<text x="676.7" y="313.5" font-size="11" fill="#ffffff">get</text>
<rect x="695.8" y="303.8" width="100.6" height="12.8" fill="#ffffff" rx="3.2" opacity="0.62"/>
<text x="699.8" y="313.5" font-size="11" fill="#111">global Mercoledì</text>
<path d="M786.1 308.8 H790.7 L788.4 311.9 Z" fill="#cf5a27"/>
<rect x="649" y="320.4" width="141" height="20" fill="#d05f2d"/>
<rect x="649" y="320.4" width="141" height="1" fill="#ffffff" opacity="0.28"/>
<rect x="649" y="339.4" width="141" height="1" fill="#000000" opacity="0.18"/>
<rect x="789" y="320.4" width="1" height="20" fill="#000" opacity="0.15"/>
<path d="M649.3 324.6 c 0,8.1 -6.48,-6.48 -6.48,6.075 s 6.48,-2.025 6.48,6.075 Z" fill="#d05f2d"/>
<text x="621.5" y="333.4" font-size="11" fill="#ffffff">+</text>
<circle cx="662.4" cy="330.3" r="6.2" fill="#4527a8" stroke="#8f7bd6" stroke-width="0.9"/>
<text x="662.4" y="333.6" font-size="9" fill="#ffffff" font-weight="bold" text-anchor="middle">?</text>
<text x="676.7" y="333.8" font-size="11" fill="#ffffff">get</text>
<rect x="695.8" y="324.1" width="89.7" height="12.8" fill="#ffffff" rx="3.2" opacity="0.62"/>
<text x="699.8" y="333.8" font-size="11" fill="#111">global Giovedì</text>
<path d="M775.2 329.1 H779.8 L777.5 332.2 Z" fill="#cf5a27"/>
<rect x="649" y="340.7" width="121" height="20" fill="#d05f2d"/>
<rect x="649" y="340.7" width="121" height="1" fill="#ffffff" opacity="0.28"/>
<rect x="649" y="359.7" width="121" height="1" fill="#000000" opacity="0.18"/>
<rect x="769" y="340.7" width="1" height="20" fill="#000" opacity="0.15"/>
<path d="M649.3 344.9 c 0,8.1 -6.48,-6.48 -6.48,6.075 s 6.48,-2.025 6.48,6.075 Z" fill="#d05f2d"/>
<text x="621.5" y="353.7" font-size="11" fill="#ffffff">+</text>
<text x="656.5" y="354.1" font-size="11" fill="#ffffff">get</text>
<rect x="675.9" y="344.4" width="89.7" height="12.8" fill="#ffffff" rx="3.2" opacity="0.62"/>
<text x="679.7" y="354.1" font-size="11" fill="#111">global Venerdì</text>
<path d="M755.5 349.4 H760.1 L757.8 352.5 Z" fill="#cf5a27"/>
<rect x="649" y="361" width="117" height="20" fill="#d05f2d"/>
<rect x="649" y="361" width="117" height="1" fill="#ffffff" opacity="0.28"/>
<rect x="649" y="380" width="117" height="1" fill="#000000" opacity="0.18"/>
<rect x="765" y="361" width="1" height="20" fill="#000" opacity="0.15"/>
<path d="M649.3 365.2 c 0,8.1 -6.48,-6.48 -6.48,6.075 s 6.48,-2.025 6.48,6.075 Z" fill="#d05f2d"/>
<text x="621.5" y="374" font-size="11" fill="#ffffff">+</text>
<text x="656.5" y="374.4" font-size="11" fill="#ffffff">get</text>
<rect x="675.9" y="364.7" width="85.7" height="12.8" fill="#ffffff" rx="3.2" opacity="0.62"/>
<text x="679.7" y="374.4" font-size="11" fill="#111">global Sabato</text>
<path d="M751.5 369.7 H756.1 L753.8 372.8 Z" fill="#cf5a27"/>
<rect x="649" y="381.3" width="133" height="20" fill="#d05f2d"/>
<rect x="649" y="381.3" width="133" height="1" fill="#ffffff" opacity="0.28"/>
<rect x="649" y="400.3" width="133" height="1" fill="#000000" opacity="0.18"/>
<rect x="781" y="381.3" width="1" height="20" fill="#000" opacity="0.15"/>
<path d="M649.3 385.5 c 0,8.1 -6.48,-6.48 -6.48,6.075 s 6.48,-2.025 6.48,6.075 Z" fill="#d05f2d"/>
<text x="621.5" y="394.3" font-size="11" fill="#ffffff">+</text>
<text x="656.5" y="394.7" font-size="11" fill="#ffffff">get</text>
<rect x="675.9" y="385" width="101.7" height="12.8" fill="#ffffff" rx="3.2" opacity="0.62"/>
<text x="679.7" y="394.7" font-size="11" fill="#111">global Domenica</text>
<path d="M767.5 390 H772.1 L769.8 393.1 Z" fill="#cf5a27"/>
<rect x="452.3" y="401.4" width="162" height="20.3" fill="#d05f2d"/>
<rect x="452.3" y="401.4" width="162" height="1" fill="#ffffff" opacity="0.28"/>
<text x="459.5" y="414.9" font-size="11" fill="#ffffff">set</text>
<rect x="478" y="405.2" width="109" height="12.8" fill="#ffffff" rx="3.2" opacity="0.62"/>
<text x="481.7" y="414.9" font-size="11" fill="#111">global TotAperture</text>
<path d="M577.7 410.2 H582.3 L580 413.3 Z" fill="#cf5a27"/>
<text x="591" y="414.9" font-size="11" fill="#ffffff">to</text>
<rect x="614" y="401.4" width="160.3" height="20.1" fill="#d05f2d"/>
<rect x="614" y="401.4" width="160.3" height="1" fill="#ffffff" opacity="0.28"/>
<rect x="614" y="420.5" width="160.3" height="1" fill="#000000" opacity="0.18"/>
<rect x="773.3" y="401.4" width="1" height="20.1" fill="#000" opacity="0.15"/>
<path d="M614 401.4 H774.3 V421.3 H614 V421.6 c 0,-8.1 -6.48,6.48 -6.48,-6.075 s 6.48,2.025 6.48,-6.075 Z" fill="#d05f2d" stroke="#ffcc33" stroke-width="2.2" stroke-linejoin="round"/>
<circle cx="627.6" cy="411.4" r="6.2" fill="#4527a8" stroke="#8f7bd6" stroke-width="0.9"/>
<text x="627.6" y="414.7" font-size="9" fill="#ffffff" font-weight="bold" text-anchor="middle">?</text>
<text x="643" y="414.9" font-size="11" fill="#ffffff">get</text>
<rect x="661.3" y="405.2" width="109.3" height="12.8" fill="#ffffff" rx="3.2" opacity="0.62"/>
<text x="665.6" y="414.9" font-size="11" fill="#111">global TotAperture</text>
<path d="M761.1 410.2 H765.7 L763.4 413.3 Z" fill="#cf5a27"/>
<rect x="452.3" y="421.7" width="201.2" height="20.3" fill="#266643"/>
<rect x="452.3" y="421.7" width="201.2" height="1" fill="#ffffff" opacity="0.28"/>
<path d="M463.8 421.6 l 4.4,3.4 h 3 l 4.4,-3.4 Z" fill="#d05f2d"/>
<text x="459.5" y="435.2" font-size="11" fill="#ffffff">set</text>
<rect x="481.2" y="425.5" width="91" height="12.8" fill="#ffffff" rx="3.2" opacity="0.62"/>
<text x="485.5" y="435.2" font-size="11" fill="#111">LblTotAperture</text>
<path d="M562.7 430.5 H567.3 L565 433.6 Z" fill="#266643"/>
<text x="576.8" y="435.2" font-size="11" fill="#ffffff">.</text>
<rect x="583" y="425.5" width="39.8" height="12.8" fill="#ffffff" rx="3.2" opacity="0.62"/>
<text x="587.4" y="435.2" font-size="11" fill="#111">Text</text>
<path d="M613.5 430.5 H618.1 L615.8 433.6 Z" fill="#266643"/>
<text x="630" y="435.2" font-size="11" fill="#ffffff">to</text>
<rect x="653.5" y="421.7" width="160.5" height="20.1" fill="#d05f2d"/>
<rect x="653.5" y="421.7" width="160.5" height="1" fill="#ffffff" opacity="0.28"/>
<rect x="653.5" y="440.8" width="160.5" height="1" fill="#000000" opacity="0.18"/>
<rect x="813" y="421.7" width="1" height="20.1" fill="#000" opacity="0.15"/>
<path d="M653.8 425.9 c 0,8.1 -6.48,-6.48 -6.48,6.075 s 6.48,-2.025 6.48,6.075 Z" fill="#d05f2d"/>
<circle cx="667.2" cy="431.7" r="6.2" fill="#4527a8" stroke="#8f7bd6" stroke-width="0.9"/>
<text x="667.2" y="435" font-size="9" fill="#ffffff" font-weight="bold" text-anchor="middle">?</text>
<text x="681.3" y="435.2" font-size="11" fill="#ffffff">get</text>
<rect x="700" y="425.5" width="111" height="12.8" fill="#ffffff" rx="3.2" opacity="0.62"/>
<text x="704.4" y="435.2" font-size="11" fill="#111">global TotAperture</text>
<path d="M800 430.5 H804.6 L802.3 433.6 Z" fill="#cf5a27"/>
<path d="M452.3 442 H618.8 V502.6 H457 Q452.3 502.6 452.3 498.1 Z" fill="#7c5385"/>
<rect x="452.3" y="442" width="166.5" height="1" fill="#ffffff" opacity="0.28"/>
<path d="M463.8 441.9 l 4.4,3.4 h 3 l 4.4,-3.4 Z" fill="#266643"/>
<path d="M463.8 502.3 l 4.4,3.4 h 3 l 4.4,-3.4 Z" fill="#7c5385"/>
<path d="M452.6 496.5 Q452.6 503.1 459 503.1 H464" fill="none" stroke="#ffffff" stroke-width="1.1" opacity="0.85"/>
<text x="459.7" y="455.5" font-size="11" fill="#ffffff">call</text>
<rect x="483" y="445.8" width="61.7" height="12.8" fill="#ffffff" rx="3.2" opacity="0.62"/>
<text x="487.4" y="455.5" font-size="11" fill="#111">TinyDB1</text>
<path d="M535.2 450.8 H539.8 L537.5 453.9 Z" fill="#74507d"/>
<text x="548.4" y="455.5" font-size="11" fill="#ffffff">.StoreValue</text>
<text x="605" y="475.8" font-size="11" fill="#ffffff" text-anchor="end">tag</text>
<text x="605" y="496.2" font-size="11" fill="#ffffff" text-anchor="end">valueToStore</text>
<rect x="619.5" y="462.2" width="95" height="20.3" fill="#b32d5e"/>
<rect x="619.5" y="462.2" width="95" height="1" fill="#ffffff" opacity="0.28"/>
<rect x="619.5" y="481.5" width="95" height="1" fill="#000000" opacity="0.18"/>
<rect x="713.5" y="462.2" width="1" height="20.3" fill="#000" opacity="0.15"/>
<path d="M619.8 466.4 c 0,8.1 -6.48,-6.48 -6.48,6.075 s 6.48,-2.025 6.48,6.075 Z" fill="#b32d5e"/>
<text x="626.8" y="475.7" font-size="11" fill="#ffffff">“</text>
<text x="702.8" y="475.7" font-size="11" fill="#ffffff">”</text>
<rect x="634.5" y="466" width="64.3" height="12.8" fill="#ffffff" rx="3.2" opacity="0.62"/>
<text x="638.8" y="475.7" font-size="11" fill="#111">TotAperture</text>
<rect x="619.5" y="482.6" width="150.2" height="20.3" fill="#439970"/>
<rect x="619.5" y="482.6" width="150.2" height="1" fill="#ffffff" opacity="0.28"/>
<rect x="619.5" y="501.9" width="150.2" height="1" fill="#000000" opacity="0.18"/>
<rect x="768.7" y="482.6" width="1" height="20.3" fill="#000" opacity="0.15"/>
<path d="M619.8 486.8 c 0,8.1 -6.48,-6.48 -6.48,6.075 s 6.48,-2.025 6.48,6.075 Z" fill="#439970"/>
<rect x="624.4" y="486.4" width="90" height="12.8" fill="#ffffff" rx="3.2" opacity="0.62"/>
<text x="628.7" y="496.1" font-size="11" fill="#111">LblTotAperture</text>
<path d="M704.3 491.4 H708.9 L706.6 494.5 Z" fill="#3d8c66"/>
<text x="719" y="496.1" font-size="11" fill="#ffffff">.</text>
<rect x="725" y="486.4" width="40" height="12.8" fill="#ffffff" rx="3.2" opacity="0.62"/>
<text x="729.4" y="496.1" font-size="11" fill="#111">Text</text>
<path d="M755.5 491.4 H760.1 L757.8 494.5 Z" fill="#3d8c66"/>
<path d="M894.1,216.1 C833.8,210.0 668.7,288.2 668.7,288.2 C668.7,288.2 840.9,238.1 901.3,244.3 Z" fill="#e38b73" transform="translate(0.7,0.9)"/>
<path d="M894.1,216.1 C833.8,210.0 668.7,288.2 668.7,288.2 C668.7,288.2 840.9,238.1 901.3,244.3 Z" fill="#fdb4a4"/>
<rect x="837.6" y="200.4" width="120.2" height="59.6" fill="#e38b73" rx="4.5"/>
<rect x="837.6" y="200.4" width="119.1" height="58.3" fill="#fdb4a4" rx="4.5"/>
<rect x="838.4" y="201" width="117.2" height="1" fill="#fec9bd" opacity="0.9"/>
<rect x="842.1" y="204.9" width="111.2" height="50.3" fill="#ffffcc" rx="1.2"/>
<path d="M949.2 260 L957.8 251.4 V260 Z" fill="#9a9a9a"/>
<path d="M952.2 259.7 L957.5 254.4 M954.9 259.7 L957.5 257.1" fill="none" stroke="#c4c4c4" stroke-width="0.7"/>
<text x="843.4" y="216.7" font-size="6.9" fill="#111" class="m">Do It Result: "30"</text>
<text x="843.4" y="230.7" font-size="6.9" fill="#111" class="m">---</text>
<path d="M900.3,281.9 C843.0,264.7 668.9,309.7 668.9,309.7 C668.9,309.7 844.7,293.7 901.9,310.9 Z" fill="#e38b73" transform="translate(0.7,0.9)"/>
<path d="M900.3,281.9 C843.0,264.7 668.9,309.7 668.9,309.7 C668.9,309.7 844.7,293.7 901.9,310.9 Z" fill="#fdb4a4"/>
<rect x="841" y="266.6" width="120.2" height="59.6" fill="#e38b73" rx="4.5"/>
<rect x="841" y="266.6" width="119.1" height="58.3" fill="#fdb4a4" rx="4.5"/>
<rect x="841.8" y="267.2" width="117.2" height="1" fill="#fec9bd" opacity="0.9"/>
<rect x="845.5" y="271.1" width="111.2" height="50.3" fill="#ffffcc" rx="1.2"/>
<path d="M952.6 326.2 L961.2 317.6 V326.2 Z" fill="#9a9a9a"/>
<path d="M955.6 325.9 L960.9 320.6 M958.3 325.9 L960.9 323.3" fill="none" stroke="#c4c4c4" stroke-width="0.7"/>
<text x="846.8" y="282.1" font-size="6.9" fill="#111" class="m">Do It Result: "33"</text>
<text x="846.8" y="296.1" font-size="6.9" fill="#111" class="m">---</text>
<path d="M905.3,348.0 C851.4,319.9 668.8,331.3 668.8,331.3 C668.8,331.3 847.6,348.6 901.5,376.8 Z" fill="#e38b73" transform="translate(0.7,0.9)"/>
<path d="M905.3,348.0 C851.4,319.9 668.8,331.3 668.8,331.3 C668.8,331.3 847.6,348.6 901.5,376.8 Z" fill="#fdb4a4"/>
<rect x="843.3" y="332.6" width="120.2" height="59.6" fill="#e38b73" rx="4.5"/>
<rect x="843.3" y="332.6" width="119.1" height="58.3" fill="#fdb4a4" rx="4.5"/>
<rect x="844.1" y="333.2" width="117.2" height="1" fill="#fec9bd" opacity="0.9"/>
<rect x="847.8" y="337.1" width="111.2" height="50.3" fill="#ffffcc" rx="1.2"/>
<path d="M954.9 392.2 L963.5 383.6 V392.2 Z" fill="#9a9a9a"/>
<path d="M957.9 391.9 L963.2 386.6 M960.6 391.9 L963.2 389.3" fill="none" stroke="#c4c4c4" stroke-width="0.7"/>
<text x="849.1" y="348.1" font-size="6.9" fill="#111" class="m">Do It Result: "4"</text>
<text x="849.1" y="362.1" font-size="6.9" fill="#111" class="m">---</text>
<path d="M969.7,490.5 C905.7,447.8 673.5,433.2 673.5,433.2 C673.5,433.2 898.8,476.0 962.9,518.7 Z" fill="#e38b73" transform="translate(0.7,0.9)"/>
<path d="M969.7,490.5 C905.7,447.8 673.5,433.2 673.5,433.2 C673.5,433.2 898.8,476.0 962.9,518.7 Z" fill="#fdb4a4"/>
<rect x="906.2" y="474.8" width="120.2" height="59.6" fill="#e38b73" rx="4.5"/>
<rect x="906.2" y="474.8" width="119.1" height="58.3" fill="#fdb4a4" rx="4.5"/>
<rect x="907" y="475.4" width="117.2" height="1" fill="#fec9bd" opacity="0.9"/>
<rect x="910.7" y="479.3" width="111.2" height="50.3" fill="#ffffcc" rx="1.2"/>
<path d="M1017.8 534.4 L1026.4 525.8 V534.4 Z" fill="#9a9a9a"/>
<path d="M1020.8 534.1 L1026.1 528.8 M1023.5 534.1 L1026.1 531.5" fill="none" stroke="#c4c4c4" stroke-width="0.7"/>
<text x="912" y="490.9" font-size="6.9" fill="#111" class="m">Do It Result: 0</text>
<text x="912" y="504.9" font-size="6.9" fill="#111" class="m">---</text>
<path d="M646.1,355.6 C634.8,364.2 631.1,405.9 631.1,405.9 C631.1,405.9 659.2,379.9 670.5,371.2 Z" fill="#e38b73" transform="translate(0.7,0.9)"/>
<path d="M646.1,355.6 C634.8,364.2 631.1,405.9 631.1,405.9 C631.1,405.9 659.2,379.9 670.5,371.2 Z" fill="#fdb4a4"/>
<rect x="598.8" y="334.4" width="119" height="58" fill="#e38b73" rx="4.5"/>
<rect x="598.8" y="334.4" width="117.9" height="56.7" fill="#fdb4a4" rx="4.5"/>
<rect x="599.6" y="335" width="116" height="1" fill="#fec9bd" opacity="0.9"/>
<rect x="603.3" y="338.9" width="110" height="48.7" fill="#ffffcc" rx="1.2"/>
<path d="M709.2 392.4 L717.8 383.8 V392.4 Z" fill="#9a9a9a"/>
<path d="M712.2 392.1 L717.5 386.8 M714.9 392.1 L717.5 389.5" fill="none" stroke="#c4c4c4" stroke-width="0.7"/>
<text x="604.6" y="349.4" font-size="6.9" fill="#111" class="m">Do It Result: 0</text>
<text x="604.6" y="363.4" font-size="6.9" fill="#111" class="m">---</text>
<g opacity="0.8">
<path d="M285 543 L295.5 553.4 H274.5 Z" fill="#dedede" stroke="#b5b5b5" stroke-width="0.8"/>
<path d="M285 591.2 L295.5 580.8 H274.5 Z" fill="#dedede" stroke="#b5b5b5" stroke-width="0.8"/>
<path d="M351.8 543 L362.3 553.4 H341.3 Z" fill="#dedede" stroke="#b5b5b5" stroke-width="0.8"/>
<path d="M351.8 591.2 L362.3 580.8 H341.3 Z" fill="#dedede" stroke="#b5b5b5" stroke-width="0.8"/>
<path d="M283 561 L290.8 574 H275.2 Z" fill="#f7d44a" stroke="#d9a91e" stroke-width="0.9" stroke-linejoin="round"/>
<text x="283" y="572.8" font-size="9" fill="#b8860b" font-weight="bold" text-anchor="middle">!</text>
<text x="296.2" y="574" font-size="11.5" fill="#cfcfcf">2</text>
<circle cx="347.8" cy="568.1" r="7.6" fill="#e4231f" stroke="#b81a17" stroke-width="0.8"/>
<path d="M344 564.3 L351.6 571.9 M351.6 564.3 L344 571.9" fill="none" stroke="#ffffff" stroke-width="2.1" stroke-linecap="round"/>
<text x="361.3" y="574" font-size="11.5" fill="#cfcfcf">0</text>
</g>
<rect x="259.8" y="594.6" width="120.6" height="19.8" fill="#e9e9e9" stroke="#bcbcbc" stroke-width="1"/>
<text x="273.6" y="608.5" font-size="13.3" fill="#a9a9a9" textLength="92.6" lengthAdjust="spacing">Show Warnings</text>
<rect x="537.5" y="635.6" width="593.5" height="10" fill="#c9c9c9" rx="5"/>
<rect x="1233.4" y="493.3" width="9.2" height="49.6" fill="#c9c9c9" rx="4.6"/>
<path d="M1188.5 231.2 Q1200.5 228.6 1203.2 236.5 Q1207.8 256 1207.2 273 Q1207.2 276.6 1203.5 276.6 L1196 276.8 Z" fill="#5b5b5b" stroke="#4b4546" stroke-width="1.5" stroke-linejoin="round"/>
<path d="M1194.3 238.3 Q1199.3 239.5 1200.4 250 Q1201.4 262 1200.9 272.8 L1196.2 273.4 Q1196.4 254 1192 239.5 Z" fill="#ffffff"/>
<path d="M1164.3 224.6 Q1164.3 219.2 1170 219.2 Q1175.9 219.2 1176 225.2" fill="#9a9a9a" stroke="#4b4546" stroke-width="1.9"/>
<path d="M1178 225.2 Q1191.6 228 1195.8 246 Q1198.8 264 1197.8 280.3 L1190.5 284.8 L1182 250 Z" fill="#4db6ac" stroke="#4b4546" stroke-width="1.8" stroke-linejoin="round"/>
<path d="M1148.5 283.6 Q1143.3 282.8 1142.4 276 Q1140.8 262 1141.8 250 Q1144 226 1166 224.3 Q1185.8 223.2 1190.2 244 Q1193.4 262 1191.6 279 Q1191.2 284.4 1186 285 Q1167 287.2 1148.5 283.6 Z" fill="#4db6ac" stroke="#4b4546" stroke-width="1.9" stroke-linejoin="round"/>
<path d="M1155.5 261.4 Q1168.5 258.6 1181.8 261.2 Q1184.6 261.8 1184.5 265 Q1184.3 270.5 1183 274 Q1182.3 276 1180 276.3 Q1168.5 278 1157.5 276.4 Q1155.2 276 1154.5 273.8 Q1153.2 269.5 1153 265 Q1152.9 262 1155.5 261.4 Z" fill="#4db6ac" stroke="#4b4546" stroke-width="1.6" stroke-linejoin="round"/>
<path d="M1153.4 266 Q1168.5 268.4 1184.2 265.8" fill="none" stroke="#4b4546" stroke-width="1.4"/>
<rect x="1183" y="377.2" width="18.8" height="18.8" rx="1.6" fill="none" stroke="#6f6f6f" stroke-width="2"/>
<path d="M1187 386.3 L1190.9 390 L1197.8 382.6" fill="none" stroke="#6f6f6f" stroke-width="2.1"/>
<path d="M1207.2 381.6 V1400" fill="none" stroke="none" stroke-width="1"/>
<path d="M1207.3 381.6 V399.4 Q1207.3 401.3 1205.4 401.3 H1187.3" fill="none" stroke="#6f6f6f" stroke-width="2"/>
<circle cx="1194.9" cy="441.3" r="10.3" fill="none" stroke="#6f6f6f" stroke-width="2.2"/>
<circle cx="1194.9" cy="441.3" r="3.9" fill="#6f6f6f"/>
<path d="M1194.9 425.6 V430.8 M1194.9 451.8 V457 M1179.2 441.3 H1184.4 M1205.4 441.3 H1210.6" fill="none" stroke="#6f6f6f" stroke-width="2"/>
<circle cx="1195" cy="484.2" r="15" fill="#ffffff" stroke="#6f6f6f" stroke-width="1.5"/>
<path d="M1187.4 484.2 H1202.6 M1195 476.6 V491.8" fill="none" stroke="#6f6f6f" stroke-width="1.8"/>
<circle cx="1195" cy="517.8" r="15" fill="#ffffff" stroke="#6f6f6f" stroke-width="1.5"/>
<path d="M1187.4 517.8 H1202.6" fill="none" stroke="#6f6f6f" stroke-width="1.8"/>
<path d="M1169 572 H1205 V610.6 Q1205 613.6 1202 613.6 H1172 Q1169 613.6 1169 610.6 Z" fill="#757575"/>
<path d="M1166.2 560.8 L1178.2 560.6 L1179.4 558.1 L1193.2 558.5 L1194.2 561.4 L1208.3 563 L1207.8 569.4 L1166 566.4 Z" fill="#757575"/>
</g>
<defs><linearGradient id="fg" x1="0" x2="0" y1="0" y2="1"><stop offset="0" stop-color="#f6f6f6"/><stop offset="1" stop-color="#ececec"/></linearGradient>
<linearGradient id="tb" x1="0" x2="1" y1="0" y2="0"><stop offset="0" stop-color="#f5e9d8"/><stop offset="0.3" stop-color="#f6e8dc"/><stop offset="0.5" stop-color="#f5e5dc"/><stop offset="0.8" stop-color="#f3e5da"/><stop offset="1" stop-color="#f3e7dc"/></linearGradient>
<linearGradient id="wl" x1="0" x2="1" y1="0" y2="1"><stop offset="0" stop-color="#55cbf5"/><stop offset="1" stop-color="#0a6acb"/></linearGradient></defs>
<rect x="0" y="650" width="1280" height="22.5" fill="url(#fg)"/>
<text x="450" y="665" font-size="12.3" fill="#8a8a8a" textLength="173" lengthAdjust="spacing">Privacy Policy and Terms of Use</text>
<rect x="450" y="666.6" width="173" height="0.9" fill="#8a8a8a"/>
<text x="646.5" y="665" font-size="12.3" fill="#8a8a8a" textLength="70" lengthAdjust="spacing">Accessibility:</text>
<text x="720" y="665" font-size="12.3" fill="#8a8a8a" textLength="110" lengthAdjust="spacing">accessibility.mit.edu</text>
<rect x="720" y="666.6" width="110" height="0.9" fill="#8a8a8a"/>
<rect x="0" y="672" width="1280" height="48" fill="url(#tb)"/>
<rect x="0" y="672" width="1280" height="1" fill="#dcd3cb"/>
<rect x="20.5" y="685.5" width="11" height="10.8" fill="#2f9fe6"/>
<rect x="32.7" y="685.5" width="11" height="10.8" fill="#2f9fe6"/>
<rect x="20.5" y="697.3" width="11" height="10.8" fill="#2f9fe6"/>
<rect x="32.7" y="697.3" width="11" height="10.8" fill="#2f9fe6"/>
<rect x="20.5" y="685.5" width="23.2" height="22.6" fill="url(#wl)" opacity="0.0"/>
<rect x="20.5" y="685.5" width="11" height="10.8" fill="#5ccaf6"/>
<rect x="32.7" y="685.5" width="11" height="10.8" fill="#3fb1ee"/>
<rect x="20.5" y="697.3" width="11" height="10.8" fill="#2f9ce6"/>
<rect x="32.7" y="697.3" width="11" height="10.8" fill="#1479d6"/>
<rect x="58.5" y="681.5" width="217.5" height="30" rx="15" fill="#fcf5ee" stroke="#e3d8cd" stroke-width="1"/>
<circle cx="75.3" cy="695.4" r="5" fill="none" stroke="#222" stroke-width="1.5"/>
<path d="M79 699.2 L83 703.3" fill="none" stroke="#222" stroke-width="1.7" stroke-linecap="round"/>
<text x="94.5" y="701" font-size="12.8" fill="#5a5a5a" textLength="34.3" lengthAdjust="spacing">Cerca</text>
<path d="M289.5 690.5 Q293 686.5 299 688.5 Q306 691 313.3 686.3 Q313.5 695 310 700.5 L313 704.6 L310.5 705.8 L306.5 701.8 Q299 704.5 294.5 701 Q291 698 289.5 690.5 Z" fill="#7d7468"/>
<path d="M306.5 700 L311.5 704.3" fill="none" stroke="#e98a2b" stroke-width="1.8"/>
<circle cx="312.4" cy="705.2" r="1.3" fill="#222"/>
<circle cx="297.3" cy="694.2" r="3" fill="#ffffff" stroke="#333" stroke-width="0.5"/>
<circle cx="303.2" cy="694.4" r="3.2" fill="#ffffff" stroke="#333" stroke-width="0.5"/>
<circle cx="297.8" cy="694.6" r="1.2" fill="#111"/>
<circle cx="303.8" cy="694.8" r="1.3" fill="#111"/>
<circle cx="291" cy="694" r="1.9" fill="#111"/>
<path d="M333 688 Q333 685 335 685 H341.5 L344 687.5 H355.5 Q357.2 687.5 357.2 689.3 V705 Q357.2 706.8 355.5 706.8 H334.8 Q333 706.8 333 705 Z" fill="#e8a920"/>
<path d="M333 690.5 H357.2 V705 Q357.2 706.8 355.5 706.8 H334.8 Q333 706.8 333 705 Z" fill="#fbce4c"/>
<path d="M337.2 706.8 V702.3 Q337.2 700 339.5 700 H351.3 Q353.6 700 353.6 702.3 V706.8 Z" fill="#1b7fd6"/>
<rect x="340" y="702.6" width="10.8" height="1.3" fill="#0f5fae" rx="0.6"/>
<rect x="342.7" y="712.2" width="6" height="2.7" fill="#8a8279" rx="1.35"/>
<rect x="370.6" y="677" width="37.4" height="38" rx="4.5" fill="#fbf5ec" stroke="#efe5da" stroke-width="0.8"/>
<path d="M399.65 689.40 A12.2 12.2 0 0 1 389.43 707.90 L394.66 698.85 L389.20 689.40 Z" fill="#fcc934"/>
<path d="M389.43 707.90 A12.2 12.2 0 0 1 378.52 689.80 L383.74 698.85 L394.66 698.85 Z" fill="#1ea446"/>
<path d="M378.52 689.80 A12.2 12.2 0 0 1 399.65 689.40 L389.20 689.40 L383.74 698.85 Z" fill="#e33b2e"/>
<circle cx="389.2" cy="695.7" r="6.4" fill="#ffffff"/>
<circle cx="389.2" cy="695.7" r="5" fill="#3b7ded"/>
<rect x="381.3" y="712.2" width="15.6" height="2.7" fill="#1a73d8" rx="1.35"/>
<path d="M433 684.6 Q444.2 685 444.2 694.5 Q444.2 701 438 700.8 Q434.6 700.8 435.3 704 Q436 707.2 432 707 Q422 705.5 422 696 Q422.5 685.2 433 684.6 Z" fill="#2ea3e6"/>
<circle cx="428.3" cy="691" r="1.9" fill="#3b9a3a"/>
<circle cx="433.8" cy="688.6" r="1.9" fill="#f2b51d"/>
<circle cx="426" cy="696.5" r="1.9" fill="#e5532a"/>
<circle cx="434.6" cy="697.2" r="1.4" fill="#e8f4fb"/>
<path d="M439.6 691.5 L440.4 706.5 L442.2 706.5 L442.6 691.5 Z" fill="#b37436"/>
<path d="M438.6 686.8 H443.8 L442.8 692 H439.4 Z" fill="#e9c69a"/>
<rect x="431" y="712.2" width="6" height="2.7" fill="#8a8279" rx="1.35"/>
<path d="M961.2 698.6 L966 693.8 L970.8 698.6" fill="none" stroke="#222" stroke-width="1.5" stroke-linecap="round" stroke-linejoin="round"/>
<circle cx="997.9" cy="695.8" r="8.2" fill="#f47b20"/>
<path d="M992.5 698.5 Q997 691 1003.2 692 M993 700.8 Q998.5 695.5 1004 697.3 M994.5 702.6 Q999 699.8 1003 701" fill="none" stroke="#ffffff" stroke-width="1.4" stroke-linecap="round"/>
<rect x="1022.3" y="688.3" width="15" height="11.4" fill="#7b7b7b" stroke="#2c2c86" stroke-width="1"/>
<rect x="1022" y="701.2" width="6.3" height="2.4" fill="#7b7b7b"/>
<rect x="1031" y="701.2" width="6.3" height="2.4" fill="#7b7b7b"/>
<rect x="1022" y="703.3" width="6.3" height="0.8" fill="#2c2c86"/>
<rect x="1031" y="703.3" width="6.3" height="0.8" fill="#2c2c86"/>
<ellipse cx="1061.6" cy="696" rx="5.8" ry="8.4" fill="#1e7be0"/>
<path d="M1058.8 692.8 L1064.3 698.6 L1061.5 701.2 V690.8 L1064.3 693.4 L1058.8 699.2" fill="none" stroke="#ffffff" stroke-width="1.1" stroke-linejoin="round"/>
<path d="M1094 687.3 Q1097.5 689.8 1101.2 689.8 Q1101.6 699.5 1094 703.6 Q1086.4 699.5 1086.8 689.8 Q1090.5 689.8 1094 687.3 Z" fill="#2b8fe3"/>
<path d="M1094 687.3 Q1097.5 689.8 1101.2 689.8 Q1101.6 699.5 1094 703.6 Z" fill="#1a6fc4"/>
<circle cx="1098.3" cy="700.6" r="4" fill="#1f9d3a" stroke="#f4e4d8" stroke-width="0.8"/>
<path d="M1096.3 700.7 L1097.8 702.2 L1100.4 699.2" fill="none" stroke="#ffffff" stroke-width="1.1"/>
<circle cx="1125.4" cy="701.6" r="1.3" fill="#222"/>
<path d="M1121.7 698.3 Q1125.4 695 1129.1 698.3 M1119.2 695.5 Q1125.4 690 1131.6 695.5 M1116.8 692.8 Q1125.4 685.2 1134 692.8" fill="none" stroke="#222" stroke-width="1.3" stroke-linecap="round"/>
<path d="M1142.3 693.6 H1145 L1148.6 690.2 V701.8 L1145 698.4 H1142.3 Z" fill="none" stroke="#222" stroke-width="1.2" stroke-linejoin="round"/>
<path d="M1151.2 693.2 Q1153 696 1151.2 698.8 M1153.8 691 Q1157 696 1153.8 701 M1156.4 689 Q1160.8 696 1156.4 703" fill="none" stroke="#222" stroke-width="1.1" stroke-linecap="round"/>
<rect x="1166.2" y="690.6" width="13.6" height="10.4" rx="2.6" fill="none" stroke="#222" stroke-width="1.3"/>
<rect x="1168.6" y="693" width="6.8" height="5.6" fill="#222" rx="0.8"/>
<path d="M1181.4 694 V697.6" fill="none" stroke="#222" stroke-width="1.8" stroke-linecap="round"/>
<text x="1260.6" y="692" font-size="12.3" fill="#222" text-anchor="end">16:27</text>
<text x="1260.6" y="707.8" font-size="12.3" fill="#222" text-anchor="end">19/02/2026</text>
</svg>
</body></html>
